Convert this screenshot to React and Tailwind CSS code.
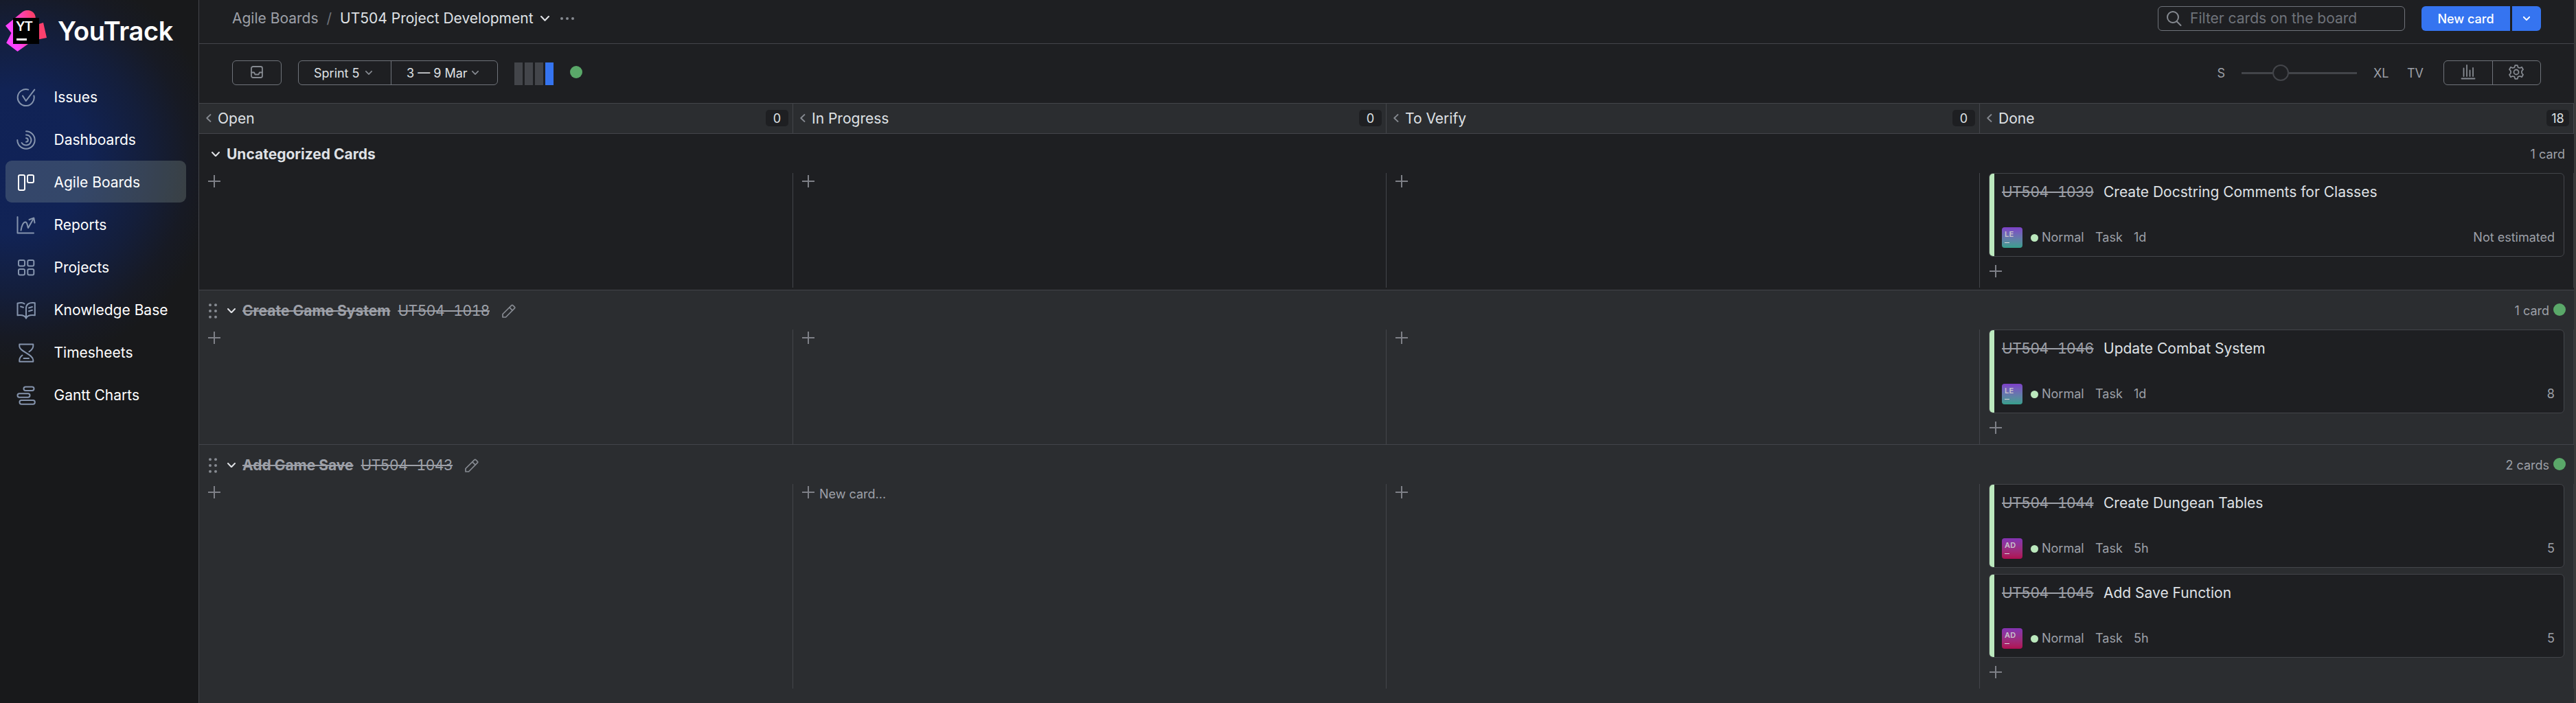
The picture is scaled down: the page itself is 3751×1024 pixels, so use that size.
import React from "react";

function Svg({ size = 28, vb = 28, sw = 2, className = "", children }) {
  return (
    <svg
      width={size}
      height={size}
      viewBox={`0 0 ${vb} ${vb}`}
      fill="none"
      stroke="currentColor"
      strokeWidth={sw}
      strokeLinecap="round"
      strokeLinejoin="round"
      className={`shrink-0 ${className}`}
    >
      {children}
    </svg>
  );
}

const navIcons = {
  issues: (
    <>
      <path d="M17.2 2.6A12 12 0 1 0 25.4 11.4" />
      <path d="M9 11.5 13.8 19 26.3 2.6" />
    </>
  ),
  dashboards: (
    <>
      <path d="M14 1.3A12.7 12.7 0 1 1 1.3 14" />
      <path d="M14 6.5A7.5 7.5 0 1 1 7.6 18" />
      <path d="M14 11.2A2.8 2.8 0 1 1 14 16.8" />
    </>
  ),
  boards: (
    <>
      <rect x="3" y="3" width="9" height="22" rx="2" />
      <rect x="16" y="3" width="9" height="11" rx="2" />
    </>
  ),
  reports: (
    <>
      <path d="M1.5 2v23.5H25" />
      <path d="M6.500 21.500C7.500 15 10 8.500 13.500 9.500C16 10.500 15.500 14 17 18L25 4" />
      <path d="M18.500 6 25.300 3.500 26.500 10.500" />
    </>
  ),
  projects: (
    <>
      <rect x="3" y="3" width="9" height="8.500" rx="2" />
      <rect x="16.300" y="3" width="9" height="8.500" rx="2" />
      <rect x="3" y="16" width="9" height="8.500" rx="2" />
      <rect x="16.300" y="16" width="9" height="8.500" rx="2" />
    </>
  ),
  knowledge: (
    <>
      <path d="M14 25.500C12.500 22 8 20.500 1.500 21.300V3.800C6 2.500 10 3 11.500 4.500" />
      <path d="M14 25.500C15.500 22 20 20.500 26.800 21.300V3.300C18 2 14 5.500 14 11V25" />
      <path d="M6 8.500 10 9.700M18 10.500 23 9M18 15.300 23 13.800" />
    </>
  ),
  timesheets: (
    <>
      <path d="M18.500 12.300C22 9.800 24.300 7 24.300 4.500V1.500H4.300V4.500C4.300 12 24.300 16 24.300 24.500V26.800H4.300V24.500C4.300 21.500 6 19.500 8.500 17.500" />
      <path d="M10.500 22h7.500" />
    </>
  ),
  gantt: (
    <>
      <rect x="10.500" y="1.500" width="15" height="5.500" rx="2.700" />
      <rect x="1.500" y="11.200" width="18" height="5.500" rx="2.700" />
      <rect x="4.500" y="21" width="22.300" height="5.700" rx="2.700" />
    </>
  ),
};

const nav = [
  ["Issues", "issues"],
  ["Dashboards", "dashboards"],
  ["Agile Boards", "boards"],
  ["Reports", "reports"],
  ["Projects", "projects"],
  ["Knowledge Base", "knowledge"],
  ["Timesheets", "timesheets"],
  ["Gantt Charts", "gantt"],
];

function ChevronDown({ w = 12, sw = 2, className = "" }) {
  return (
    <svg width={w} height={w * 0.6} viewBox="0 0 12 7.200" fill="none" stroke="currentColor" strokeWidth={sw} strokeLinecap="round" strokeLinejoin="round" className={`shrink-0 ${className}`}>
      <path d="M1 1 6 6.200 11 1" />
    </svg>
  );
}

function Plus({ className = "" }) {
  return (
    <svg width="18" height="18" viewBox="0 0 18 18" fill="none" stroke="#7e8087" strokeWidth="2" className={`shrink-0 ${className}`}>
      <path d="M0 9H18M9 0V18" />
    </svg>
  );
}

function Logo() {
  return (
    <svg width="60" height="60" viewBox="0 0 60 60" className="shrink-0">
      <defs>
        <linearGradient id="yt" x1="0" y1="35" x2="60" y2="20" gradientUnits="userSpaceOnUse">
          <stop offset="0.200" stopColor="#fb43ff" />
          <stop offset="0.720" stopColor="#fb406d" />
        </linearGradient>
      </defs>
      <path d="M0 22.500 24.500 2.500C33-3.500 43.800 1.500 43.800 11.500V21.500L55 18 60 40 40 44 17.500 60 1.200 47.500 8.500 33Z" fill="url(#yt)" />
      <rect x="11" y="11" width="38" height="38" fill="#000" />
      <rect x="16" y="41" width="15" height="3" fill="#fff" />
      <text x="15" y="30" fill="#fff" fontFamily="Inter, sans-serif" fontWeight="600" fontSize="19" textLength="25">YT</text>
    </svg>
  );
}

function Sidebar() {
  return (
    <aside className="flex w-[290px] shrink-0 flex-col border-r border-[#43454a] bg-[#18191b] bg-[radial-gradient(circle_300px_at_20px_235px,#102257_0%,#112355_35%,#141e3a_65%,#171a24_85%,#18191b_100%)]">
      <div className="flex h-[110px] items-start pt-[15px] pl-2">
        <Logo />
        <span className="ml-4 pt-[10px] text-[38px] leading-10 font-semibold tracking-[-0.400px] text-white">YouTrack</span>
      </div>
      <nav className="flex flex-col gap-px pl-2">
        {nav.map(([label, icon]) => {
          const active = label === "Agile Boards";
          return (
            <div key={label} className={`flex h-[61px] w-[263px] items-center gap-[26.500px] rounded-[9px] pt-[2px] pl-4 ${active ? "bg-[#9fb4a8]/25 text-white" : "text-[#8594ad]"}`}>
              <Svg>{navIcons[icon]}</Svg>
              <span className="text-[21px] whitespace-nowrap text-white">{label}</span>
            </div>
          );
        })}
      </nav>
    </aside>
  );
}

function Header() {
  return (
    <header className="flex h-[64px] shrink-0 items-start justify-between border-b border-[#43454a] pt-[9px] pr-[48px] pl-12">
      <div className="flex h-9 items-center text-[21px]">
        <span className="text-[#9da0a8]">Agile Boards</span>
        <span className="mx-3 text-[#6f737a]">/</span>
        <span className="text-[#dfe1e5]">UT504 Project Development</span>
        <ChevronDown w={13} className="ml-2.5 text-[#dfe1e5]" />
        <svg width="20" height="4" className="ml-4 fill-[#868a91]">
          <circle cx="2" cy="2" r="2" />
          <circle cx="10" cy="2" r="2" />
          <circle cx="18" cy="2" r="2" />
        </svg>
      </div>
      <div className="flex">
        <div className="mr-6 flex h-9 w-[360px] items-center rounded-md border border-[#6f737a] pl-[11px] text-[#868a91]">
          <Svg size={24} vb={24}>
            <circle cx="10" cy="10" r="8" />
            <path d="M16 16.500 21.500 22" />
          </Svg>
          <span className="ml-[11px] text-[21px] text-[#6f737a]">Filter cards on the board</span>
        </div>
        <div className="flex h-9 gap-[3px] text-white">
          <div className="flex w-[129px] items-center justify-center rounded-l-md bg-[#3574f0] text-[18px] font-medium">New card</div>
          <div className="flex w-[42px] items-center justify-center rounded-r-md bg-[#3574f0]">
            <ChevronDown w={10} sw={2.4} />
          </div>
        </div>
      </div>
    </header>
  );
}

function Toolbar() {
  return (
    <div className="flex h-[87px] shrink-0 items-start justify-between border-b border-[#43454a] pt-6 pr-[48px] pl-12 text-[18px]">
      <div className="flex h-9 items-center">
        <div className="flex h-9 w-[72px] items-center justify-center rounded-md border border-[#6f737a] text-[#868a91]">
          <Svg size={18} vb={18} sw={1.8} className="mb-[2px]">
            <rect x="1" y="1" width="16" height="16" rx="2.500" />
            <path d="M1 9.500H5L6.500 12.500H11.500L13 9.500H17" />
          </Svg>
        </div>
        <div className="ml-6 flex h-9 w-[291px] rounded-md border border-[#6f737a] text-[#dfe1e5]">
          <div className="flex w-[135px] items-center border-r border-[#6f737a] pl-[22px]">
            Sprint 5<ChevronDown w={10} className="ml-2 text-[#868a91]" />
          </div>
          <div className="flex flex-1 items-center pl-[22px]">
            3 — 9 Mar<ChevronDown w={10} className="ml-[6px] text-[#868a91]" />
          </div>
        </div>
        <div className="ml-6 flex h-[33px] gap-[3px] self-end">
          <div className="w-3 bg-[#43454a]" />
          <div className="w-3 bg-[#43454a]" />
          <div className="w-3 bg-[#43454a]" />
          <div className="w-3 bg-[#3574f0]" />
        </div>
        <div className="mb-[2px] ml-6 size-[18px] rounded-full bg-[#5aa869]" />
      </div>
      <div className="flex h-9 items-center text-[#9da0a8]">
        <span className="mr-6">S</span>
        <div className="flex h-6 w-[168px] items-center">
          <div className="h-[3px] w-[45px] bg-[#43454a]" />
          <div className="size-6 rounded-full border-[2.500px] border-[#43454a]" />
          <div className="h-[3px] flex-1 bg-[#43454a]" />
        </div>
        <span className="ml-6 w-[49px]">XL</span>
        <span className="w-[53px]">TV</span>
        <div className="flex h-9 w-[142px] rounded-md border border-[#6f737a] text-[#868a91]">
          <div className="flex w-[71px] items-center justify-center border-r border-[#6f737a]">
            <Svg size={22} vb={22} sw={1.800} className="mb-0.5">
              <path d="M4.500 5.500V17M9 1V17M13.500 8.500V17M18 5V17M1.500 20.500H20.500" />
            </Svg>
          </div>
          <div className="flex flex-1 items-center justify-center">
            <Svg size={22} vb={22} sw={1.800} className="mr-px mb-0.5">
              <path d="M9.300 1.200H12.700L13.700 4.300 16.500 5 19 3.800 21 7.200 19 9.500V12.500L21 14.800 19 18.200 16.500 17 13.700 17.700 12.700 20.800H9.300L8.300 17.700 5.500 17 3 18.200 1 14.800 3 12.500V9.500L1 7.200 3 3.800 5.500 5 8.300 4.300Z" />
              <circle cx="11" cy="11" r="3.500" />
            </Svg>
          </div>
        </div>
      </div>
    </div>
  );
}

const gridCols = "grid grid-cols-[865px_864px_864px_865px]";

const columns = [
  ["Open", 0],
  ["In Progress", 0],
  ["To Verify", 0],
  ["Done", 18],
];

function ColumnHeaders() {
  return (
    <div className={`${gridCols} h-[44px] shrink-0 border-b border-[#43454a] bg-[#2b2d30]`}>
      {columns.map(([name, count]) => (
        <div key={name} className="flex items-center border-r border-[#43454a] pr-[6px] pb-px pl-2.5">
          <svg width="8" height="12" viewBox="0 0 8 12" fill="none" stroke="#868a91" strokeWidth="1.800" strokeLinecap="round" strokeLinejoin="round">
            <path d="M6.500 1 1.200 6 6.500 11" />
          </svg>
          <span className="ml-[9px] flex-1 text-[21px] leading-none text-[#dfe1e5]">{name}</span>
          <span className="flex h-6 w-[33px] items-center justify-center rounded-[5px] bg-[#1e1f22] text-[18px] text-[#dfe1e5]">{count}</span>
        </div>
      ))}
    </div>
  );
}

function IssueId({ children, className = "" }) {
  return <span className={`text-[21px] tracking-[-0.450px] text-[#9da0a8] tabular-nums line-through decoration-2 ${className}`}>{children}</span>;
}

function Card({ card }) {
  return (
    <div className="flex h-[122px] overflow-hidden rounded-md border border-[#43454a] bg-[#1e1f22]">
      <div className="w-[7px] bg-[#bbe8bd]" />
      <div className="flex flex-1 flex-col justify-between py-3 pr-[13px] pl-[11px]">
        <div className="flex h-[29px] items-center whitespace-nowrap">
          <div className="w-[148px]">
            <IssueId>{card.id}</IssueId>
          </div>
          <span className="text-[21px] text-[#dfe1e5]">{card.title}</span>
        </div>
        <div className="flex h-[30px] items-center text-[18px] text-[#9da0a8]">
          <div className={`flex size-[30px] flex-col rounded-[4px] pt-[6px] pl-1 bg-linear-to-b ${card.who === "LE" ? "from-[#7d3fc8] to-[#34a08c]" : "from-[#8433b4] to-[#b00c51]"}`}>
            <span className="text-[11px] leading-[9px] font-semibold tracking-[0.300px] text-[#c8c4cc]">{card.who}</span>
            <span className="mt-[7px] h-px w-[7px] bg-[#d8d8d8]" />
          </div>
          <span className="ml-3 size-[11px] rounded-full bg-[#bbe8bd]" />
          <div className="ml-[5px] flex flex-1 pb-[2px]">
            <span className="w-[78px]">Normal</span>
            <span className="w-[56px]">Task</span>
            <span className="flex-1">{card.time}</span>
            <span>{card.estimate}</span>
          </div>
        </div>
      </div>
    </div>
  );
}

function Pencil() {
  return (
    <Svg size={20} vb={20} sw={1.700} className="ml-[18px] text-[#868a91]">
      <path d="M1 19V14.500L13.800 1.800A1.500 1.500 0 0 1 15.900 1.800L18.200 4.100A1.500 1.500 0 0 1 18.200 6.200L5.500 19Z" />
      <path d="M10.800 4.800 15.200 9.200" />
    </Svg>
  );
}

function Lane({ lane }) {
  return (
    <section className={lane.id ? "border-t border-[#43454a] bg-[#2b2d30]" : "pb-[3px]"}>
      <div className={`flex h-[57px] items-center pt-[2px] ${lane.id ? "pr-3 pl-[14px]" : "pr-[13px] pl-[18px]"}`}>
        {lane.id && (
          <svg width="12" height="22" className="mr-[15px] fill-[#868a91]">
            {[2, 10].map((x) => [2.200, 11, 19.800].map((y) => <circle key={`${x}-${y}`} cx={x} cy={y} r="2" />))}
          </svg>
        )}
        <ChevronDown w={12} className="mr-[10px] text-[#dfe1e5]" />
        <span className={`text-[21px] font-bold ${lane.id ? "text-[#9da0a8] line-through decoration-2" : "text-[#dfe1e5]"}`}>{lane.title}</span>
        {lane.id && <IssueId className="ml-[11px]">{lane.id}</IssueId>}
        {lane.id && <Pencil />}
        <span className="ml-auto text-[18px] text-[#9da0a8]">{lane.count}</span>
        {lane.id && <span className="mb-[3px] ml-[6px] size-[18px] rounded-full bg-[#5aa869]" />}
      </div>
      <div className={`${gridCols} ${lane.tall ? "h-[298px]" : "h-[167px]"}`}>
        {columns.map(([name]) =>
          name === "Done" ? (
            <div key={name} className="flex flex-col gap-[9px] border-r border-[#393b3f] pr-[13px] pl-[13px]">
              {lane.cards.map((c) => (
                <Card key={c.id} card={c} />
              ))}
              <Plus className="mt-[3px] ml-px" />
            </div>
          ) : (
            <div key={name} className="flex items-start gap-[7px] border-r border-[#43454a] pt-[3px] pl-[13px]">
              <Plus />
              {lane.tall && name === "In Progress" && <span className="pt-[2px] text-[18px] leading-5 text-[#9da0a8]">New card...</span>}
            </div>
          )
        )}
      </div>
    </section>
  );
}

const lanes = [
  {
    title: "Uncategorized Cards",
    count: "1 card",
    cards: [{ id: "UT504-1039", title: "Create Docstring Comments for Classes", who: "LE", time: "1d", estimate: "Not estimated" }],
  },
  {
    title: "Create Game System",
    id: "UT504-1018",
    count: "1 card",
    cards: [{ id: "UT504-1046", title: "Update Combat System", who: "LE", time: "1d", estimate: "8" }],
  },
  {
    title: "Add Game Save",
    id: "UT504-1043",
    count: "2 cards",
    tall: true,
    cards: [
      { id: "UT504-1044", title: "Create Dungean Tables", who: "AD", time: "5h", estimate: "5" },
      { id: "UT504-1045", title: "Add Save Function", who: "AD", time: "5h", estimate: "5" },
    ],
  },
];

export default function App() {
  return (
    <div className="flex h-[1024px] w-[3751px] overflow-hidden bg-[#1e1f22] font-['Inter',sans-serif]">
      <Sidebar />
      <main className="flex flex-1 flex-col bg-[#2b2d30]">
        <div className="flex flex-col bg-[#1e1f22]">
          <Header />
          <Toolbar />
          <ColumnHeaders />
          {lanes.map((l) => (
            <Lane key={l.title} lane={l} />
          ))}
        </div>
      </main>
      <div className="w-[3px] shrink-0 bg-[#393939]" />
    </div>
  );
}
